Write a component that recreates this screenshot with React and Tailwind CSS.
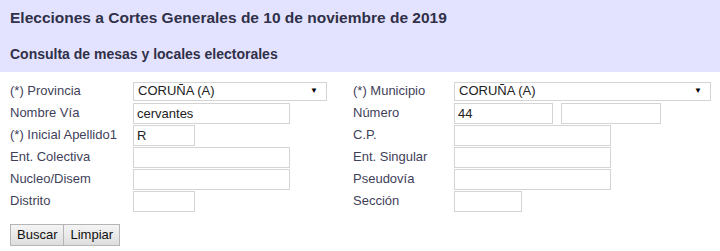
import React from 'react';

const font = { fontFamily: '"Liberation Sans", Arial, sans-serif' };

function Select({ value, className }) {
  return (
    <div className={`h-[19px] border border-[#d4d4d4] bg-white flex items-center justify-between pl-[4px] pr-[8px] text-[13px] text-[#222] ${className}`}>
      <span>{value}</span>
      <span className="text-[8px] text-black">▼</span>
    </div>
  );
}

function Input({ value = '', className }) {
  return (
    <input
      readOnly
      value={value}
      className={`h-[21px] border border-[#d4d4d4] bg-white px-[3px] text-[13px] text-[#222] outline-none ${className}`}
      style={font}
    />
  );
}

function Label({ children, className }) {
  return <div className={`text-[13px] text-[#3f3f5a] ${className}`}>{children}</div>;
}

export default function App() {
  return (
    <div className="w-[720px] h-[251px] bg-white overflow-hidden" style={font}>
      <div className="bg-[#e3e3ff] h-[72px] pl-[10px]">
        <div className="h-[36px] flex items-center text-[15.5px] font-bold text-[#303048]">
          Elecciones a Cortes Generales de 10 de noviembre de 2019
        </div>
        <div className="h-[36px] flex items-center text-[14px] font-bold text-[#303048]">
          Consulta de mesas y locales electorales
        </div>
      </div>

      <div className="pt-[8px] pl-[10px]">
        <div className="h-[22px] flex items-center">
          <Label className="w-[123px]">(*) Provincia</Label>
          <Select value="CORUÑA (A)" className="w-[194px]" />
          <Label className="w-[101px] ml-[26px]">(*) Municipio</Label>
          <Select value="CORUÑA (A)" className="w-[257px]" />
        </div>
        <div className="h-[22px] flex items-center">
          <Label className="w-[123px]">Nombre Vía</Label>
          <Input value="cervantes" className="w-[157px]" />
          <Label className="w-[101px] ml-[63px]">Número</Label>
          <Input value="44" className="w-[99px]" />
          <Input className="w-[100px] ml-[8px]" />
        </div>
        <div className="h-[22px] flex items-center">
          <Label className="w-[123px]">(*) Inicial Apellido1</Label>
          <Input value="R" className="w-[62px]" />
          <Label className="w-[101px] ml-[158px]">C.P.</Label>
          <Input className="w-[157px]" />
        </div>
        <div className="h-[22px] flex items-center">
          <Label className="w-[123px]">Ent. Colectiva</Label>
          <Input className="w-[157px]" />
          <Label className="w-[101px] ml-[63px]">Ent. Singular</Label>
          <Input className="w-[157px]" />
        </div>
        <div className="h-[22px] flex items-center">
          <Label className="w-[123px]">Nucleo/Disem</Label>
          <Input className="w-[157px]" />
          <Label className="w-[101px] ml-[63px]">Pseudovía</Label>
          <Input className="w-[157px]" />
        </div>
        <div className="h-[22px] flex items-center">
          <Label className="w-[123px]">Distrito</Label>
          <Input className="w-[62px]" />
          <Label className="w-[101px] ml-[158px]">Sección</Label>
          <Input className="w-[68px]" />
        </div>

        <div className="mt-[12px] flex">
          <button className="h-[22px] px-[6px] border border-[#b5b5b5] bg-gradient-to-b from-[#f4f4f4] to-[#dedede] text-[13px] text-[#111]">
            Buscar
          </button>
          <button className="h-[22px] px-[6px] border border-l-0 border-[#b5b5b5] bg-gradient-to-b from-[#f4f4f4] to-[#dedede] text-[13px] text-[#111]">
            Limpiar
          </button>
        </div>
      </div>
    </div>
  );
}
